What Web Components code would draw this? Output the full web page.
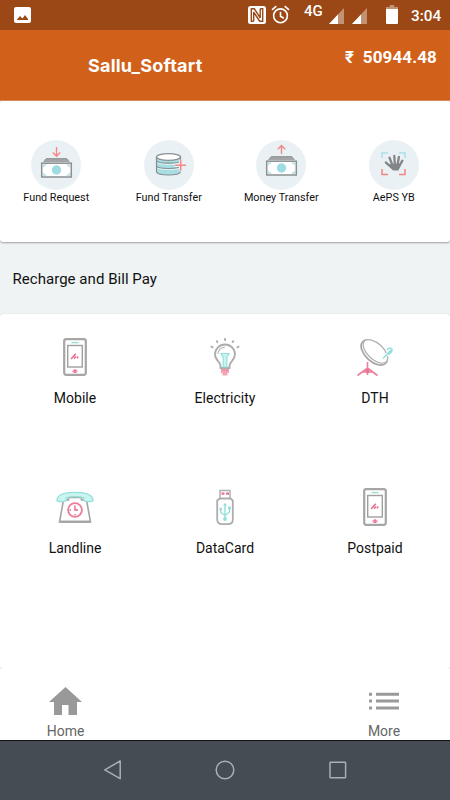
<!DOCTYPE html>
<html lang="en">
<head>
<meta charset="utf-8">
<title>Sallu_Softart</title>
<style>
	body {
		margin: 0;
		width: 450px;
		height: 800px;
		overflow: hidden;
		font-family: Roboto, "Noto Sans", sans-serif;
		background: #eff3f4;
		color: #111;
	}
</style>
</head>
<body>
<wallet-app></wallet-app>

<script>
(function() {
	// every icon is drawn in real pixels: [width, height, markup]
	const phone = `
		<rect x="1.2" y="1.2" width="21.6" height="35.6" rx="2" fill="#fff" stroke="#a6a6a6" stroke-width="2.2"/>
		<rect x="4.7" y="7.5" width="14.6" height="21.5" fill="#fff" stroke="#a0a0a0" stroke-width="1.4"/>
		<path d="M8.5 4.6h7" stroke="#9bdcd3" stroke-width="1.4"/>
		<path d="M8 21l4.8-5.2M11 20.8l1.8-2.2M14 20.3l1.2-1.8" stroke="#e8718f" stroke-width="1.6"/>
		<circle cx="12" cy="33.2" r="1.9" fill="#e7638a"/><path d="M9 33.2h6" stroke="#f2a0b6"/>`;
	const notes = `
		<path d="M5 19h23l2 3H3z" fill="#a3a5a7"/><path d="M6 18.7h21" stroke="#909294" stroke-width="1.2"/>
		<rect x="1.7" y="23.2" width="29.6" height="13.8" fill="#fff" stroke="#8b8f91" stroke-width="1.5"/>
		<path d="M3 24.5h4l-4 3zM30 24.5h-4l4 3zM3 35.7h4l-4-3zM30 35.7h-4l4-3z" fill="#b4e1e6"/>
		<circle cx="16.5" cy="30" r="4.7" fill="#9fdbe2"/>`;
	const signal = `<path d="M15 0v16H0z" fill="#fff" opacity=".4"/><path d="M9 6.4V16H0z" fill="#fff"/>`;
	const icons = {
		image: [17, 17, `<path fill-rule="evenodd" fill="#fff" d="M2 0h13a2 2 0 0 1 2 2v12a2 2 0 0 1-2 2H2a2 2 0 0 1-2-2V2a2 2 0 0 1 2-2zM3 13h11v-1l-3-4-2.5 3.5L6 9l-3 3.4z"/>`],
		nfc: [18, 18, `<rect width="18" height="18" rx="2.5" fill="#fff"/>
			<path d="M5.7 15.2H3.3V2.8h3l6 9.2M12.2 2.8h2.5v12.4h-3L5.7 6.2M5.7 6v9.2M12.2 12V2.8" fill="none" stroke="#9b4816" stroke-width="1.4"/>`],
		alarm: [19, 19, `<g fill="none" stroke="#fff" stroke-width="1.6"><circle cx="9.5" cy="10.8" r="6.9"/><path d="M9.5 6.7v4.5l3.3 2M1 4.8l4.3-3.6M18 4.8l-4.3-3.6"/></g>`],
		signal: [15, 16, signal],
		battery: [12, 19, `<path d="M3.7 0h4.6v2H12v3H0V2h3.7z" fill="#fff" opacity=".4"/><path d="M0 4h12v14a1 1 0 0 1-1 1H1a1 1 0 0 1-1-1z" fill="#fff"/>`],
		request: [33, 38, notes + `<path d="M16.5 7v9M12.8 12.5l3.7 3.8 3.7-3.8" fill="none" stroke="#f48687" stroke-width="1.4"/>`],
		money: [33, 38, `<g transform="translate(0 -2)">${notes}</g><path d="M16.5 14V5.5M12.8 9.2l3.7-3.8 3.7 3.8" fill="none" stroke="#f48687" stroke-width="1.4"/>`],
		transfer: [33, 38, `
			<path d="M4.5 17v15c2 4 22 4 24 0V17z" fill="#a9dde4"/>
			<path d="M4.5 22c3 3 21 3 24 0M4.5 27.2c3 3 21 3 24 0" fill="none" stroke="#dcf1f3" stroke-width="1.3"/>
			<path d="M4.5 17v15c2 4 22 4 24 0M4.5 20.7c2 3.3 22 3.3 24 0M4.5 26c2 3.3 22 3.3 24 0M28.5 17v4.5" fill="none" stroke="#858f92" stroke-width="1.2"/>
			<ellipse cx="16.5" cy="17" rx="12" ry="3.3" fill="#fff" stroke="#8b9092" stroke-width="1.3"/>
			<path d="M22.5 25.2h11.5M28.7 19.7v11" stroke="#eaf1f5" stroke-width="3.6"/><path d="M23 25.2h11M28.7 19.7v11" stroke="#f28988" stroke-width="1.5"/>`],
		hand: [33, 38, `
			<path d="M5 18v-5h6M22 13h6v5" fill="none" stroke="#aee0e7" stroke-width="1.5"/>
			<path d="M5 29v5.5h6M22 34.5h6V29" fill="none" stroke="#f28484" stroke-width="1.5"/>
			<path d="M10.5 24.2c2 1 3.2 4 5.5 6.2h5.5c1-2.2 2.2-4.3 2.8-7z" fill="#838587"/>
			<path d="M15 28L8.8 22.4M15.8 26l-3.3-8.2M18 26l-.7-10M20.3 26l1.6-9M22 26.5l3.4-5.8" stroke="#838587" stroke-width="2.3" stroke-linecap="round"/>`],
		phone: [24, 38, phone],
		bulb: [32, 40, `
			<path d="M11.5 31v-2.5C11.5 25 6 23 6 17.5a10 10 0 0 1 20 0C26 23 20.5 25 20.5 28.5V31z" fill="#fff" stroke="#adadad" stroke-width="1.9"/>
			<path d="M8.8 17a7.5 7.5 0 0 1 7.2-7" fill="none" stroke="#b4b4b4" stroke-width="1.2"/>
			<path d="M12 16.5h8l-2.2 3.7V30h-3.6v-9.8z" fill="#c7f4ef" stroke="#93e0da" stroke-width="1.2"/>
			<path d="M12 32h8v4h-1.5v2.5h-5V36H12z" fill="#f4a5b5"/><path d="M12 33h8" stroke="#f0879f"/>
			<path d="M16 1v3M7.3 3.5l1.5 2.3M24.7 3.5l-1.5 2.3M1.7 9.3l2.6 1.5M30.3 9.3l-2.6 1.5" stroke="#aaa" stroke-width="1.7"/>`],
		dish: [38, 40, `
			<ellipse cx="18.2" cy="15.5" rx="15.8" ry="9" transform="rotate(43 18.2 15.5)" fill="#fff" stroke="#a4a4a4" stroke-width="1.7"/>
			<ellipse cx="19.4" cy="14.4" rx="15" ry="8" transform="rotate(43 19.4 14.4)" fill="#fff" stroke="#b3b3b3" stroke-width="1.3"/>
			<path d="M27 21.5l8-8.5M31 13.2c1.5-3 5.5-2.7 5 .5-.2 1.5-2 2.5-3.5 4" fill="none" stroke="#fff" stroke-width="3"/>
			<path d="M27 21.5l8-8.5M31 13.2c1.5-3 5.5-2.7 5 .5-.2 1.5-2 2.5-3.5 4" fill="none" stroke="#90dfde" stroke-width="1.5"/>
			<path d="M11.5 25v13M1.5 38.5l10-7.5 10 7.5M6 35h11" fill="none" stroke="#ed7d9d" stroke-width="1.6"/><circle cx="11.5" cy="34" r="2.1" fill="#ec7195"/>`],
		landline: [40, 34, `
			<path d="M8.5 10h5V7.5h13V10h5L35.5 32h-31z" fill="#fff" stroke="#a5a5a5" stroke-width="1.6"/><path d="M5 31.7h30" stroke="#a3a3a3" stroke-width="2.3"/>
			<path d="M2 10.6C2 4.8 8 2.4 20 2.4s18 2.4 18 8.2c-2 1.4-7 1.4-9.2 0V7.9c-4-1.6-13.6-1.6-17.6 0v2.7c-2.2 1.4-7.2 1.4-9.2 0z" fill="#c9f5f0" stroke="#96dfda" stroke-width="1.3"/>
			<circle cx="20" cy="20" r="6.9" fill="#fff" stroke="#ea7f9a" stroke-width="1.8"/><path d="M20 15.5V20h3M20 24v1.5M14.5 20H16" fill="none" stroke="#e36a8b" stroke-width="1.4"/>`],
		usb: [20, 38, `
			<path d="M5 12V2.5h10V12" fill="#fff" stroke="#b1b1b1" stroke-width="1.5"/><path d="M6.5 5.7h3M11 5.7h3" stroke="#e7708f" stroke-width="2.2"/>
			<path d="M2.2 12.5l2.3-2h11l2.3 2v19c0 3-2 4.7-4.8 4.7H7c-2.8 0-4.8-1.7-4.8-4.7z" fill="#fff" stroke="#adadad" stroke-width="1.8"/>
			<path d="M10 17v14M5.7 21v3.5l4.3 3 4.5-3.5v-4" fill="none" stroke="#93dfd8" stroke-width="1.4"/><path d="M10 14.7l2 3H8z" fill="#93dfd8"/><circle cx="10" cy="31" r="1.9" fill="#93dfd8"/><circle cx="5.7" cy="21" r="1.4" fill="#93dfd8"/><path d="M13.1 18.5h2.8v2.8h-2.8z" fill="#93dfd8"/>`],
		home: [33, 28, `<path d="M16.5 0L33 15h-5v13h-8.5V18h-6.5v10H5V15H0z" fill="#999"/>`],
		list: [30, 18, `<path d="M0 .7h3v3H0zM7 .7h23v3H7zM0 7.6h3v3H0zM7 7.6h23v3H7zM0 14.5h3v3H0zM7 14.5h23v3H7z" fill="#999"/>`],
		back: [20, 20, `<path d="M17.2 1v17.7L1.8 9.9z" fill="none" stroke="#a9b0b5" stroke-width="1.5" stroke-linejoin="round"/>`],
		circle: [20, 20, `<circle cx="10" cy="10" r="8.8" fill="none" stroke="#a9b0b5" stroke-width="1.5"/>`],
		square: [20, 20, `<rect x="2" y="2.2" width="15.6" height="15.6" rx=".6" fill="none" stroke="#a9b0b5" stroke-width="1.5"/>`]
	};

	function define(name, html) {
		const template = document.createElement("template");
		template.innerHTML = html;
		customElements.define(name, class extends HTMLElement {
			constructor() {
				super();
				this.attachShadow({mode: "open"}).appendChild(template.content.cloneNode(true));
			}
		});
	}

	class UiIcon extends HTMLElement {
		constructor() {
			super();
			this._shadowRoot = this.attachShadow({mode: "open"});
		}

		connectedCallback() {
			const [w, h, body] = icons[this.getAttribute("name")];
			this._shadowRoot.innerHTML = `
				<style>
				:host { display: block; flex: none; }
				svg { display: block; overflow: visible; }
				</style>
				<svg width="${w}" height="${h}" viewBox="0 0 ${w} ${h}">${body}</svg>`;
		}
	}
	customElements.define("ui-icon", UiIcon);

	define("status-bar", `
		<style>
		:host {
			display: flex;
			align-items: flex-start;
			box-sizing: border-box;
			height: 30px;
			padding: 0 10px 0 14px;
			background: #9b4816;
			color: #fff;
			font-weight: 500;
		}
		.image { margin: 7px auto 0 0; }
		.nfc { margin: 6px 5px 0 0; }
		.alarm { margin: 5px 14px 0 0; }
		.net { width: 25px; font-size: 15px; line-height: 23px; }
		.signal { margin: 8px 8px 0 0; }
		.battery { margin: 5px 13px 0 11px; }
		.time { width: 29px; font-size: 15.3px; line-height: 32px; white-space: nowrap; }
		</style>
		<ui-icon class="image" name="image"></ui-icon>
		<ui-icon class="nfc" name="nfc"></ui-icon>
		<ui-icon class="alarm" name="alarm"></ui-icon>
		<span class="net">4G</span>
		<ui-icon class="signal" name="signal"></ui-icon>
		<ui-icon class="signal" name="signal"></ui-icon>
		<ui-icon class="battery" name="battery"></ui-icon>
		<span class="time">3:04</span>
	`);

	define("app-header", `
		<style>
		:host {
			display: flex;
			justify-content: space-between;
			align-items: flex-start;
			box-sizing: border-box;
			height: 71px;
			padding: 0 13px 0 88px;
			background: #d1611a;
			border-bottom: 1px solid #dc8a58;
			color: #fff;
			font-weight: 700;
			white-space: pre;
		}
		.title { font: 700 18px/71px Inter, "Open Sans", sans-serif; letter-spacing: .2px; }
		.balance { font-size: 17px; line-height: 55px; letter-spacing: .12px; }
		</style>
		<span class="title"><slot name="title"></slot></span>
		<span class="balance"><slot name="balance"></slot></span>
	`);

	define("ui-card", `
		<style>
		:host {
			display: grid;
			box-sizing: border-box;
			background: #fff;
			border-radius: 3px;
			box-shadow: 0 1px 2px rgba(0, 0, 0, .35);
		}
		</style>
		<slot></slot>
	`);

	define("quick-action", `
		<style>
		:host { display: flex; flex-direction: column; align-items: center; }
		.disc {
			display: flex;
			justify-content: center;
			width: 50px;
			height: 50px;
			border-radius: 50%;
			background: #eaf1f5;
		}
		.label { margin-top: 1px; font-size: 10.8px; line-height: 14px; white-space: nowrap; }
		</style>
		<div class="disc"><slot name="icon"></slot></div>
		<div class="label"><slot></slot></div>
	`);

	define("service-tile", `
		<style>
		:host { display: flex; flex-direction: column; align-items: center; }
		.icon { display: flex; align-items: center; height: 42px; }
		.label { margin-top: 11px; font-size: 14px; line-height: 18px; white-space: nowrap; }
		</style>
		<div class="icon"><slot name="icon"></slot></div>
		<div class="label"><slot></slot></div>
	`);

	define("tab-item", `
		<style>
		:host { display: flex; flex-direction: column; align-items: center; width: 50px; }
		.icon { display: flex; align-items: center; height: 28px; }
		.label { margin-top: 8px; font-size: 14px; line-height: 17px; color: #666; }
		</style>
		<div class="icon"><slot name="icon"></slot></div>
		<div class="label"><slot></slot></div>
	`);

	define("tab-bar", `
		<style>
		:host {
			display: flex;
			justify-content: space-between;
			box-sizing: border-box;
			height: 71px;
			padding: 18px 41px 0 40.5px;
			background: #fff;
		}
		</style>
		<slot></slot>
	`);

	define("system-nav", `
		<style>
		:host {
			display: flex;
			justify-content: center;
			align-items: center;
			gap: 92.5px;
			box-sizing: border-box;
			height: 60px;
			padding-bottom: 1px;
			border-top: 1px solid #111;
			background: #454c53;
		}
		</style>
		<ui-icon name="back"></ui-icon>
		<ui-icon name="circle"></ui-icon>
		<ui-icon name="square"></ui-icon>
	`);

	define("wallet-app", `
		<style>
		:host { display: flex; flex-direction: column; height: 800px; }
		.quick { height: 141px; padding-top: 39px; grid-template-columns: repeat(4, 1fr); }
		.services { height: 355px; padding-top: 22px; grid-template-columns: repeat(3, 1fr); grid-auto-rows: 150px; box-shadow: 0 0 1px rgba(0, 0, 0, .2); }
		h2 { margin: 0; height: 72px; padding-left: 12.5px; font-size: 15px; font-weight: 400; line-height: 74px; letter-spacing: .04px; }
		</style>
		<status-bar></status-bar>
		<app-header>
			<span slot="title">Sallu_Softart</span>
			<span slot="balance">₹  50944.48</span>
		</app-header>
		<ui-card class="quick">
			<quick-action><ui-icon slot="icon" name="request"></ui-icon>Fund Request</quick-action>
			<quick-action><ui-icon slot="icon" name="transfer"></ui-icon>Fund Transfer</quick-action>
			<quick-action><ui-icon slot="icon" name="money"></ui-icon>Money Transfer</quick-action>
			<quick-action><ui-icon slot="icon" name="hand"></ui-icon>AePS YB</quick-action>
		</ui-card>
		<h2>Recharge and Bill Pay</h2>
		<ui-card class="services">
			<service-tile><ui-icon slot="icon" name="phone"></ui-icon>Mobile</service-tile>
			<service-tile><ui-icon slot="icon" name="bulb"></ui-icon>Electricity</service-tile>
			<service-tile><ui-icon slot="icon" name="dish"></ui-icon>DTH</service-tile>
			<service-tile><ui-icon slot="icon" name="landline"></ui-icon>Landline</service-tile>
			<service-tile><ui-icon slot="icon" name="usb"></ui-icon>DataCard</service-tile>
			<service-tile><ui-icon slot="icon" name="phone"></ui-icon>Postpaid</service-tile>
		</ui-card>
		<tab-bar>
			<tab-item><ui-icon slot="icon" name="home"></ui-icon>Home</tab-item>
			<tab-item><ui-icon slot="icon" name="list"></ui-icon>More</tab-item>
		</tab-bar>
		<system-nav></system-nav>
	`);
})();
</script>
</body>
</html>
